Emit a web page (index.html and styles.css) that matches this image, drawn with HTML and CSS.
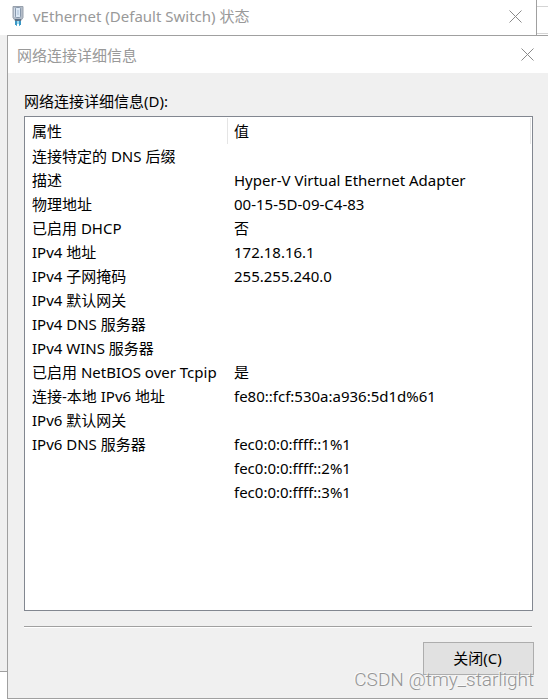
FILE: index.html
```html
<!DOCTYPE html>
<html lang="zh-CN">
<head>
<meta charset="utf-8">
<title>网络连接详细信息</title>
<link rel="stylesheet" href="styles.css">
</head>
<body>
<div class="desktop">
  <div class="app-edge"></div>
  <section class="window window-status">
    <header class="titlebar titlebar-status">
      <svg class="adapter-icon" width="12" height="20" viewBox="0 0 12 20" aria-hidden="true">
        <path d="M1 .5h10v11l-2 3H3l-2-3z" fill="#b4bdc9" stroke="#98a1ad"/>
        <path d="M2.500 2v9" fill="none" stroke="#d3dce8"/>
        <rect x="3.500" y="1.500" width="5" height="10" rx="1" fill="#dce8f5" stroke="#8797ab"/>
        <path d="M6 4v5" stroke="#a9bdd3"/>
        <path d="M3 13h6v2H3z" fill="#5d7186"/>
        <path d="M3 15h2v4H3zM7 15h2v4H7z" fill="#3c98c6"/>
        <path d="M5 15h2v3H5z" fill="#9fdcf2"/>
        <path d="M4 19h1v1H4zM7 19h1v1H7z" fill="#5bb8dc"/>
      </svg>
      <h2 class="title">vEthernet (Default Switch) 状态</h2>
      <button class="close" type="button" aria-label="关闭">
        <svg width="13" height="13" viewBox="0 0 13 13"><path d="M.5.5l12 12M12.500.5l-12 12"/></svg>
      </button>
    </header>
  </section>

  <section class="window window-details">
    <header class="titlebar titlebar-details">
      <h1 class="title">网络连接详细信息</h1>
      <button class="close" type="button" aria-label="关闭">
        <svg width="13" height="13" viewBox="0 0 13 13"><path d="M.5.5l12 12M12.500.5l-12 12"/></svg>
      </button>
    </header>
    <div class="content">
      <p class="label" id="details-label">网络连接详细信息(D):</p>
      <div class="list">
        <table class="details" aria-labelledby="details-label">
          <thead>
            <tr><th class="property" scope="col"><div class="head">属性</div></th><th scope="col"><div class="head head-last">值</div></th></tr>
          </thead>
          <tbody>
            <tr><td>连接特定的 DNS 后缀</td><td></td></tr>
            <tr><td>描述</td><td>Hyper-V Virtual Ethernet Adapter</td></tr>
            <tr><td>物理地址</td><td>00-15-5D-09-C4-83</td></tr>
            <tr><td>已启用 DHCP</td><td>否</td></tr>
            <tr><td>IPv4 地址</td><td>172.18.16.1</td></tr>
            <tr><td>IPv4 子网掩码</td><td>255.255.240.0</td></tr>
            <tr><td>IPv4 默认网关</td><td></td></tr>
            <tr><td>IPv4 DNS 服务器</td><td></td></tr>
            <tr><td>IPv4 WINS 服务器</td><td></td></tr>
            <tr><td>已启用 NetBIOS over Tcpip</td><td>是</td></tr>
            <tr><td>连接-本地 IPv6 地址</td><td>fe80::fcf:530a:a936:5d1d%61</td></tr>
            <tr><td>IPv6 默认网关</td><td></td></tr>
            <tr><td>IPv6 DNS 服务器</td><td>fec0:0:0:ffff::1%1</td></tr>
            <tr><td></td><td>fec0:0:0:ffff::2%1</td></tr>
            <tr><td></td><td>fec0:0:0:ffff::3%1</td></tr>
          </tbody>
        </table>
      </div>
      <hr class="divider">
      <footer class="actions">
        <button class="button" type="button">关闭(C)</button>
      </footer>
    </div>
  </section>
  <div class="watermark">CSDN @tmy_starlight</div>
</div>
</body>
</html>
```
FILE: styles.css
```css
* {
  box-sizing: border-box;
}

body {
  margin: 0;
  background: #fff;
  color: #000;
  font: 15px/24px "Noto Sans", "Noto Sans CJK SC", sans-serif;
}

.desktop {
  position: relative;
  min-height: 100vh;
  overflow: hidden;
}

.app-edge {
  position: absolute;
  top: 6px;
  right: 0;
  width: 11px;
  height: 28px;
  border: solid #d4d4d4;
  border-width: 1px 0;
}

/* Overlapping windows */
.window {
  position: absolute;
  background: #f0f0f0;
}

.window-status {
  inset: 0 11px 27px 0;
  border: solid #a0a0a0;
  border-width: 0 1px 1px 0;
}

.window-details {
  display: flex;
  flex-direction: column;
  inset: 35px 0 0 7px;
  border: solid #a0a0a0;
  border-width: 1px 0 1px 1px;
}

.titlebar {
  display: flex;
  align-items: center;
  background: #fff;
  color: #999;
}

.titlebar-status {
  height: 35px;
  padding: 0 14px 3px 12px;
}

.titlebar-details {
  height: 37px;
  padding: 0 14px 0 9px;
}

.adapter-icon {
  margin-right: 9px;
}

.title {
  flex: 1;
  margin: 0;
  font-size: 15px;
  font-weight: 400;
}

.close {
  display: flex;
  padding: 0;
  border: 0;
  background: none;
}

.close path {
  fill: none;
  stroke: #8a8a8a;
}

.content {
  display: flex;
  flex: 1;
  flex-direction: column;
  padding: 16px 14px 23px 16px;
}

.label {
  margin: 0 0 3px;
}

.list {
  flex: 1;
  margin-right: 1px;
  border: 1px solid #828790;
  background: #fff;
}

.details {
  width: 100%;
  border-collapse: collapse;
  table-layout: fixed;
}

.details th {
  padding: 1px 0 0;
  font-weight: 400;
  text-align: left;
}

.details .property {
  width: 203px;
}

.head {
  height: 26px;
  padding: 1px 6px;
  border-right: 1px solid #e5e5e5;
}

.property .head {
  padding-left: 7px;
}

.head-last {
  margin-right: 1px;
}

.details td {
  height: 24px;
  padding: 0 0 0 6px;
  white-space: nowrap;
}

.details td:first-child {
  padding-left: 7px;
}

.divider {
  width: calc(100% - 2px);
  height: 2px;
  margin: 15px 0 14px;
  border: solid #a0a0a0;
  border-width: 1px 0 0;
  background: #fff;
}

.actions {
  display: flex;
  justify-content: flex-end;
}

.button {
  width: 111px;
  height: 33px;
  padding: 0 2px 2px 0;
  border: 1px solid #adadad;
  background: #e1e1e1;
  color: #000;
  font: inherit;
}

.watermark {
  position: absolute;
  right: 14px;
  bottom: 7px;
  color: #969696;
  font: 300 19px/24px Roboto, sans-serif;
  text-shadow: -1px -1px 0 rgb(255 255 255 / 80%);
}
```
